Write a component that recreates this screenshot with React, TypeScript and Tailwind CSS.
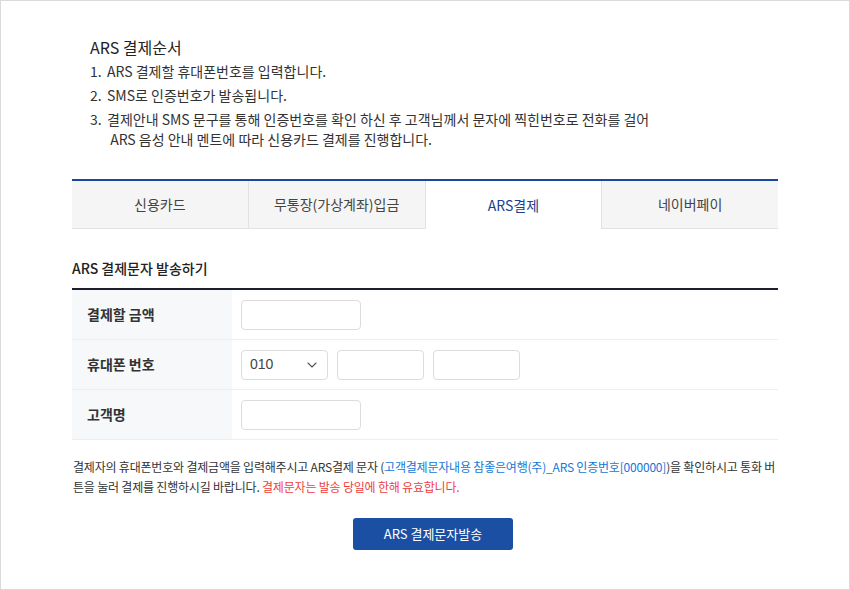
import { ChevronDown } from 'lucide-react'

const steps = [
  ['ARS 결제할 휴대폰번호를 입력합니다.'],
  ['SMS로 인증번호가 발송됩니다.'],
  ['결제안내 SMS 문구를 통해 인증번호를 확인 하신 후 고객님께서 문자에 찍힌번호로 전화를 걸어', ' ARS 음성 안내 멘트에 따라 신용카드 결제를 진행합니다.'],
]

const tabs = ['신용카드', '무통장(가상계좌)입금', 'ARS결제', '네이버페이']

function TextBox({ className = 'w-[120px]' }: { className?: string }) {
  return <div className={`h-[30px] rounded-[4px] border border-[#dcdcdc] bg-white ${className}`} />
}

export default function App() {
  return (
    <div
      className="w-[850px] h-[590px] border border-[#dadada] bg-white text-[#333]"
      style={{ fontFamily: '"Malgun Gothic", "Noto Sans CJK KR", "Noto Sans", sans-serif' }}
    >
      {/* 결제순서 안내 */}
      <div className="pl-[89px] pt-[35px]">
        <h2 className="text-[16px] leading-[22px] text-[#222]">ARS 결제순서</h2>
        <ol className="mt-[3px] flex flex-col gap-[4px] text-[14px] leading-[20px] text-[#333]">
          {steps.map((s, i) => (
            <li key={i} className="flex">
              <span className="w-[17px] shrink-0">{i + 1}.</span>
              <span className="whitespace-pre">
                {s[0]}
                {s[1] && (
                  <>
                    <br />
                    {s[1]}
                  </>
                )}
              </span>
            </li>
          ))}
        </ol>
      </div>

      <div className="mx-[71px] mt-[30px]">
        {/* 탭 */}
        <div className="flex border-t-2 border-[#1b4799]">
          {tabs.map((t, i) => {
            const active = i === 2
            return (
              <div
                key={t}
                className={
                  active
                    ? 'flex-1 h-[48px] flex items-center justify-center bg-white text-[14px] text-[#1b3f8f] border-l border-[#e2e2e2]'
                    : `flex-1 h-[48px] flex items-center justify-center bg-[#f5f5f5] text-[14px] text-[#444] border-b border-[#e2e2e2] ${i > 0 ? 'border-l' : ''}`
                }
              >
                {t}
              </div>
            )
          })}
        </div>

        {/* 결제문자 발송 */}
        <h3 className="mt-[29px] text-[14px] leading-[20px] font-medium text-[#222]">ARS 결제문자 발송하기</h3>
        <div className="mt-[10px] border-t-2 border-[#1c1f2e]">
          <div className="flex h-[50px] border-b border-[#eeeeee]">
            <div className="w-[160px] bg-[#f7f8fa] pl-[15px] flex items-center text-[14px] font-bold text-[#333]">결제할 금액</div>
            <div className="flex items-center pl-[9px]">
              <TextBox />
            </div>
          </div>
          <div className="flex h-[50px] border-b border-[#eeeeee]">
            <div className="w-[160px] bg-[#f7f8fa] pl-[15px] flex items-center text-[14px] font-bold text-[#333]">휴대폰 번호</div>
            <div className="flex items-center gap-[9px] pl-[9px]">
              <div className="h-[30px] w-[87px] rounded-[4px] border border-[#dcdcdc] bg-white flex items-center justify-between pl-[8px] pr-[7px] text-[14px] text-[#444]">
                <span style={{ fontFamily: '"Liberation Sans", Arial, sans-serif' }}>010</span>
                <ChevronDown size={16} strokeWidth={1.6} className="text-[#555]" />
              </div>
              <TextBox className="w-[87px]" />
              <TextBox className="w-[87px]" />
            </div>
          </div>
          <div className="flex h-[50px] border-b border-[#eeeeee]">
            <div className="w-[160px] bg-[#f7f8fa] pl-[15px] flex items-center text-[14px] font-bold text-[#333]">고객명</div>
            <div className="flex items-center pl-[9px]">
              <TextBox />
            </div>
          </div>
        </div>

        {/* 안내 문구 */}
        <p className="mt-[17px] pl-[1px] text-[12px] leading-[20px] text-[#333] tracking-[-0.2px]">
          결제자의 휴대폰번호와 결제금액을 입력해주시고 ARS결제 문자 (
          <span className="text-[#1577d6]">고객결제문자내용 참좋은여행(주)_ARS 인증번호[000000]</span>
          )을 확인하시고 통화 버튼을 눌러 결제를 진행하시길 바랍니다.{' '}
          <span className="text-[#f03d3d]">결제문자는 발송 당일에 한해 유효합니다.</span>
        </p>

        <div className="mt-[21px] flex justify-center pl-[16px]">
          <button className="h-[32px] w-[160px] rounded-[3px] bg-[#1b4fa3] text-[13px] text-white">
            ARS 결제문자발송
          </button>
        </div>
      </div>
    </div>
  )
}
